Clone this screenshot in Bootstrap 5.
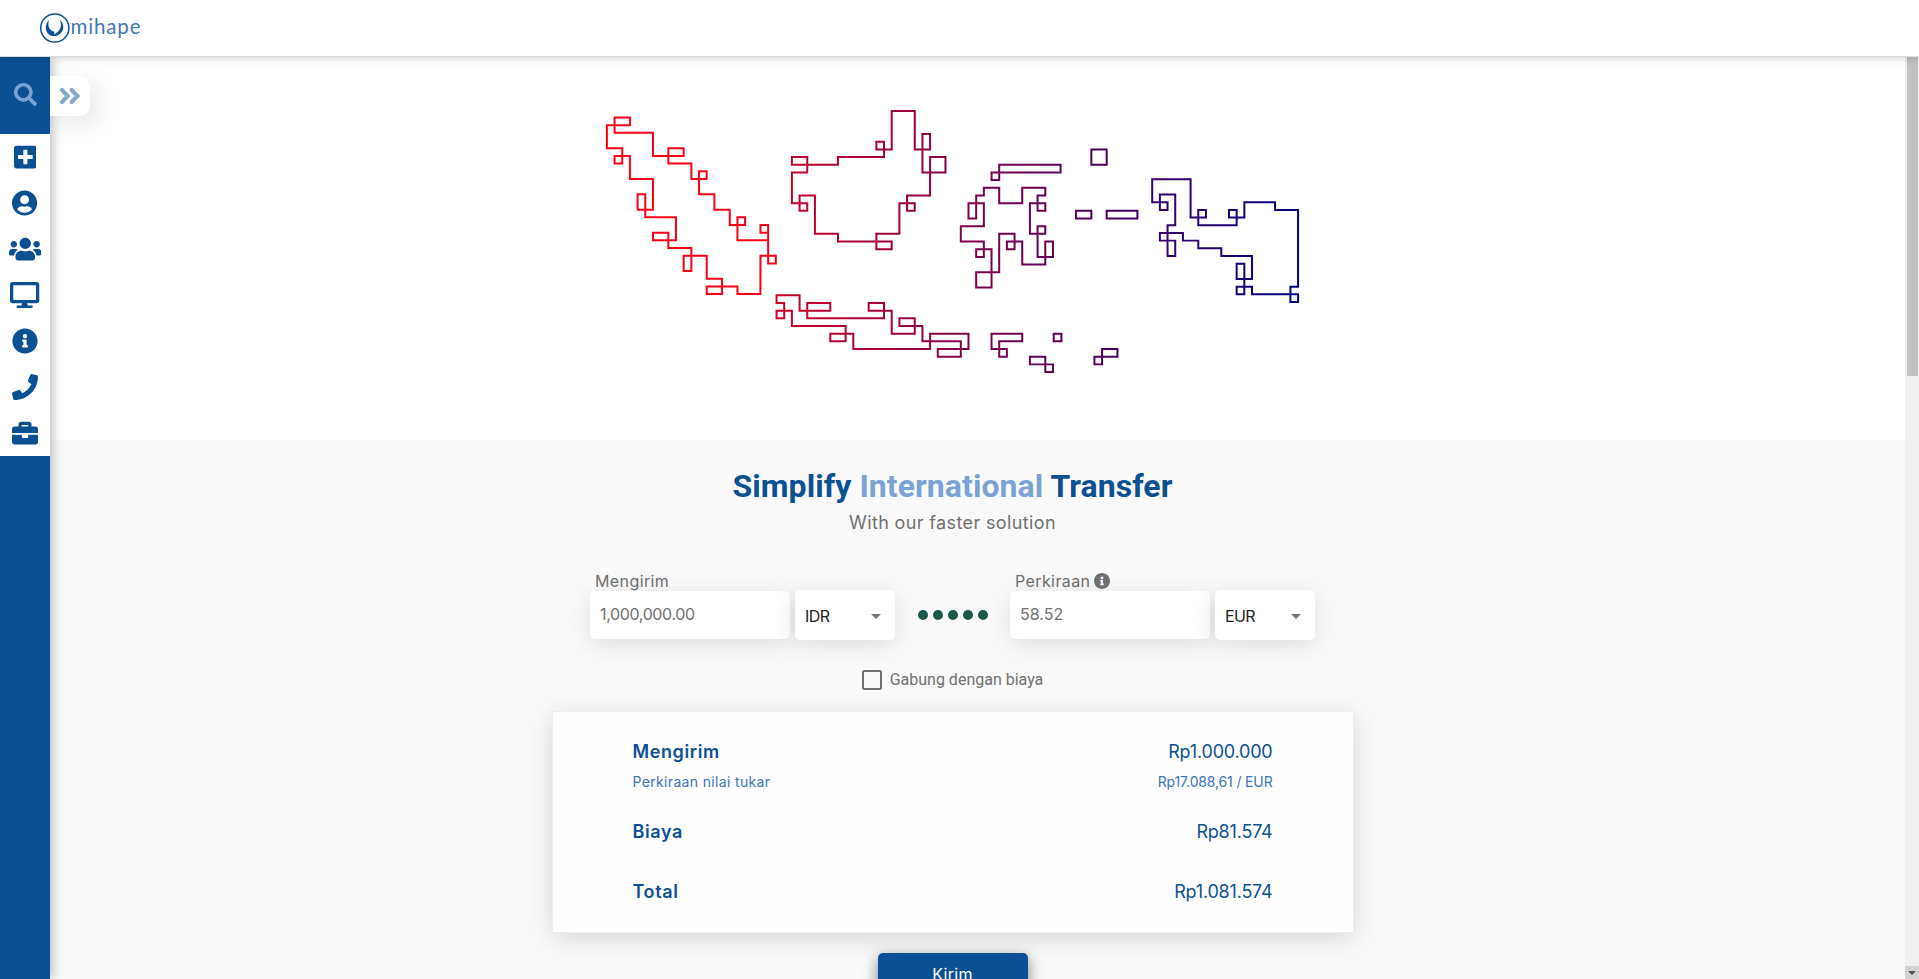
<!DOCTYPE html>
<html lang="id">
<head>
<meta charset="utf-8">
<title>Omihape</title>
<link href="https://cdn.jsdelivr.net/npm/bootstrap@5.3.0/dist/css/bootstrap.min.css" rel="stylesheet">
<style>
:root { --brand: #0b5093; --brand-soft: #7aa2d4; --ink: #707070; }
body { height: 979px; overflow: hidden; background: #fff; color: var(--ink); font-family: "Inter", "Open Sans", sans-serif; line-height: 1; }
.topbar { height: 57px; padding-left: 40px; border-bottom: 1px solid #dcdcdc; box-shadow: 0 0 10px rgba(0,0,0,.2); z-index: 5; background: #fff; position: relative; }
.shell { height: 922px; }
.side { width: 50px; background: var(--brand); box-shadow: 2px 0 12px rgba(0,0,0,.28); z-index: 3; position: relative; }
.side-search { height: 77px; padding-bottom: 2px; color: var(--brand-soft); }
.side-item { height: 46px; background: #fff; color: var(--brand); }
.side svg, .info-ico { fill: currentColor; display: block; }
.side-tab { position: absolute; left: 50px; top: 19px; width: 40px; height: 40px; background: #fff; border-radius: 0 10px 10px 0; box-shadow: 8px 8px 24px rgba(0,0,0,.1); }
.side .chevrons { fill: none; stroke: #85a7c9; stroke-width: 4; stroke-linecap: round; }
.hero { height: 383px; padding-right: 50px; }
.calc { height: 539px; background: #fafafa; padding-right: 50px; overflow: hidden; }
.headline { font: 700 32px/38px Roboto, sans-serif; letter-spacing: .06px; color: var(--brand); margin: 27px 0 0; white-space: nowrap; }
.headline span { color: var(--brand-soft); }
.tagline { font-size: 18px; line-height: 24px; margin-top: 6px; letter-spacing: .37px; height: 24px; }
.fields { margin-top: 33px; height: 72px; width: 725px; }
.cap { height: 23px; padding: 3px 0 0 5px; font-size: 16px; line-height: 20px; letter-spacing: .4px; }
.cap svg { position: relative; z-index: 1; }
.amount, .pick { background: #fff; border-radius: 5px; box-shadow: 0 5px 25px rgba(0,0,0,.12); }
.amount { width: 200px; height: 48px; padding: 0 0 2px 10px; font-size: 16px; }
.amount.long { letter-spacing: -.36px; }
.pick { width: 100px; height: 50px; margin: -1px 0 -1px 5px; padding: 2px 14px 0 10px; color: #222; font-size: 16px; letter-spacing: -.6px; position: relative; }
.arrow { border: 5px solid transparent; border-top-color: #757575; border-bottom: 0; }
.dots { padding-top: 42px; gap: 5px; }
.dots i { width: 10px; height: 10px; border-radius: 50%; background: #18594b; }
.combine { margin-top: 31px; height: 20px; gap: 8px; font: 400 16px/20px Roboto, sans-serif; }
.tick { width: 20px; height: 20px; border: 2px solid #707070; border-radius: 2px; }
.summary { width: 802px; height: 222px; margin-top: 21px; padding: 29px 80px 0 80px; background: #fefefe; border: 1px solid #ededed; box-shadow: 0 5px 25px rgba(0,0,0,.15); color: var(--brand); font-size: 18px; }
.line { height: 22px; line-height: 22px; letter-spacing: -.2px; }
.line b { font-weight: 600; letter-spacing: .62px; }
.fee { margin-top: 29px; }
.total { margin-top: 38px; }
.rate { font-size: 14px; line-height: 20px; color: #3c74b5; margin-top: 9px; height: 20px; letter-spacing: -.15px; }
.rate span:first-child { letter-spacing: .34px; }
.send { width: 150px; height: 50px; margin-top: 20px; border-radius: 5px; background: var(--brand); color: #fff; font-size: 16px; line-height: 20px; letter-spacing: .3px; padding-top: 11px; box-shadow: 0 5px 15px rgba(0,0,0,.5); text-align: center; position: relative; }
.rail { width: 14px; background: #f0f0f0; padding-left: 2px; }
.thumb { width: 11px; height: 319px; background: #c1c1c1; }
.down { width: 14px; height: 13px; margin-left: -2px; background: #d2d2d2; }
.down i { border: 4px solid transparent; border-top-color: #505050; border-bottom: 0; }
</style>
</head>
<body>
<header class="topbar d-flex align-items-center">
  <svg width="104" height="36" viewBox="40 10 104 36">
    <circle cx="54.8" cy="28" r="14.1" fill="none" stroke="#0b5093" stroke-width="1.5"/>
    <path fill="#0b5093" d="M49 20.3C44.800 24 44.700 31 49 34.500C51 36.200 54 36.500 56.500 35.700C60 34.800 63.300 31.500 63.300 27.300C63.300 24 62 21.500 59.800 20C61.800 24 61.300 29.500 57 32.500L54 34.500L54.500 31.800C50 31 47 26.500 49 20.300Z"/>
    <text x="70.500" y="33.500" font-family="Lato, sans-serif" font-size="20.500" fill="#3f78b0" textLength="70">mihape</text>
  </svg>
</header>
<div class="shell d-flex">
  <nav class="side flex-shrink-0">
    <div class="side-search d-flex align-items-center justify-content-center">
      <svg width="23" height="23" viewBox="0 0 512 512"><path d="M505 442.700L405.300 343c-4.500-4.500-10.600-7-17-7H372c27.600-35.300 44-79.700 44-128C416 93.100 322.900 0 208 0S0 93.100 0 208s93.100 208 208 208c48.300 0 92.700-16.400 128-44v16.300c0 6.400 2.500 12.500 7 17l99.700 99.700c9.400 9.400 24.600 9.400 33.900 0l28.300-28.300c9.400-9.400 9.400-24.600.1-34zM208 336c-70.700 0-128-57.200-128-128 0-70.700 57.200-128 128-128 70.700 0 128 57.200 128 128 0 70.700-57.200 128-128 128z"/></svg>
    </div>
    <div class="side-item d-flex align-items-center justify-content-center"><svg width="22.750" height="26" viewBox="0 0 448 512"><path d="M400 32H48C21.500 32 0 53.500 0 80v352c0 26.500 21.500 48 48 48h352c26.500 0 48-21.500 48-48V80c0-26.500-21.500-48-48-48zm-32 252c0 6.600-5.400 12-12 12h-92v92c0 6.600-5.400 12-12 12h-56c-6.600 0-12-5.400-12-12v-92H92c-6.600 0-12-5.400-12-12v-56c0-6.600 5.400-12 12-12h92v-92c0-6.600 5.400-12 12-12h56c6.600 0 12 5.400 12 12v92h92c6.600 0 12 5.400 12 12v56z"/></svg></div>
    <div class="side-item d-flex align-items-center justify-content-center"><svg width="25.200" height="26" viewBox="0 0 496 512"><path d="M248 8C111 8 0 119 0 256s111 248 248 248 248-111 248-248S385 8 248 8zm0 96c48.600 0 88 39.400 88 88s-39.400 88-88 88-88-39.400-88-88 39.400-88 88-88zm0 344c-58.700 0-111.300-26.600-146.500-68.200 18.800-35.400 55.600-59.800 98.500-59.800 2.400 0 4.800.4 7.100 1.100 13 4.200 26.600 6.900 40.900 6.900 14.300 0 28-2.700 40.900-6.900 2.300-.7 4.700-1.100 7.100-1.100 42.900 0 79.700 24.400 98.500 59.800C359.300 421.400 306.700 448 248 448z"/></svg></div>
    <div class="side-item d-flex align-items-center justify-content-center"><svg width="32.500" height="26" viewBox="0 0 640 512"><path d="M96 224c35.300 0 64-28.700 64-64s-28.700-64-64-64-64 28.700-64 64 28.700 64 64 64zm448 0c35.300 0 64-28.700 64-64s-28.700-64-64-64-64 28.700-64 64 28.700 64 64 64zm32 32h-64c-17.600 0-33.500 7.100-45.100 18.600 40.300 22.100 68.900 62 75.100 109.400h66c17.700 0 32-14.300 32-32v-32c0-35.300-28.700-64-64-64zm-256 0c61.900 0 112-50.100 112-112S381.900 32 320 32 208 82.100 208 144s50.100 112 112 112zm76.800 32h-8.300c-20.800 10-43.900 16-68.500 16s-47.600-6-68.500-16h-8.300C179.600 288 128 339.600 128 403.200V432c0 26.500 21.500 48 48 48h288c26.500 0 48-21.500 48-48v-28.800c0-63.600-51.600-115.200-115.200-115.200zm-223.700-13.400C161.500 263.100 145.600 256 128 256H64c-35.300 0-64 28.700-64 64v32c0 17.700 14.300 32 32 32h65.900c6.300-47.400 34.900-87.300 75.200-109.400z"/></svg></div>
    <div class="side-item d-flex align-items-center justify-content-center"><svg width="29.250" height="26" viewBox="0 0 576 512"><path d="M528 0H48C21.500 0 0 21.500 0 48v320c0 26.500 21.500 48 48 48h192l-16 48h-72c-13.300 0-24 10.700-24 24s10.700 24 24 24h272c13.300 0 24-10.700 24-24s-10.700-24-24-24h-72l-16-48h192c26.500 0 48-21.500 48-48V48c0-26.500-21.500-48-48-48zm-16 352H64V64h448v288z"/></svg></div>
    <div class="side-item d-flex align-items-center justify-content-center"><svg width="26" height="26" viewBox="0 0 512 512"><path d="M256 8C119.043 8 8 119.083 8 256c0 136.997 111.043 248 248 248s248-111.003 248-248C504 119.083 392.957 8 256 8zm0 110c23.196 0 42 18.804 42 42s-18.804 42-42 42-42-18.804-42-42 18.804-42 42-42zm56 254c0 6.627-5.373 12-12 12h-88c-6.627 0-12-5.373-12-12v-24c0-6.627 5.373-12 12-12h12v-64h-12c-6.627 0-12-5.373-12-12v-24c0-6.627 5.373-12 12-12h64c6.627 0 12 5.373 12 12v100h12c6.627 0 12 5.373 12 12v24z"/></svg></div>
    <div class="side-item d-flex align-items-center justify-content-center"><svg width="26" height="26" viewBox="0 0 512 512"><path d="M493.400 24.600l-104-24c-11.300-2.600-22.900 3.300-27.500 13.900l-48 112c-4.200 9.800-1.400 21.300 6.900 28l60.600 49.600c-36 76.700-98.900 140.500-177.200 177.200l-49.600-60.600c-6.800-8.300-18.200-11.100-28-6.900l-112 48C3.900 366.500-2 378.100.6 389.400l24 104C27.100 504.200 36.700 512 48 512c256.100 0 464-207.500 464-464 0-11.200-7.700-20.900-18.600-23.400z"/></svg></div>
    <div class="side-item d-flex align-items-center justify-content-center"><svg width="26" height="26" viewBox="0 0 512 512"><path d="M320 336c0 8.840-7.160 16-16 16h-96c-8.840 0-16-7.160-16-16v-48H0v144c0 25.600 22.400 48 48 48h416c25.600 0 48-22.400 48-48V288H320v48zm144-208h-80V80c0-25.600-22.400-48-48-48H176c-25.600 0-48 22.400-48 48v48H48c-25.600 0-48 22.400-48 48v80h512v-80c0-25.600-22.400-48-48-48zm-144 0H192V96h128v32z"/></svg></div>
    <div class="side-tab d-flex align-items-center justify-content-center">
      <svg class="chevrons" width="20" height="16" viewBox="0 0 20 16"><path d="M2 2L7.800 8L2 14M11.700 2L17.500 8L11.700 14"/></svg>
    </div>
  </nav>
  <main class="flex-grow-1">
    <section class="hero d-flex justify-content-center">
      <svg width="705" height="383" viewBox="600.300 57.200 705 383" fill="none">
        <defs>
          <linearGradient id="fadeWest" gradientUnits="userSpaceOnUse" x1="-2" y1="0" x2="66" y2="0"><stop stop-color="#cc0026"/><stop offset="1" stop-color="#000084"/></linearGradient>
          <linearGradient id="fadeEast" gradientUnits="userSpaceOnUse" x1="-49" y1="0" x2="19" y2="0"><stop stop-color="#cc0026"/><stop offset="1" stop-color="#000084"/></linearGradient>
        </defs>
        <!-- Sumatra -->
        <g transform="translate(607.200 117.700) scale(7.678)" stroke="#fb0014" stroke-width=".26">
          <path d="M0 1H3V0H1V2H6V5H10V4H8V6H11V8H13V7H12V10H14V12H16V14H18V13H17V16H21V14H20V15H21V19H22V18H20V23H17V22H13V23H15V21H13V18H10V20H11V17H8V15H6V16H9V13H5V10H4V12H6V8H3V5H1V6H2V4H0Z"/>
        </g>
        <!-- Kalimantan, Java, Sulawesi and the smaller islands -->
        <g transform="translate(792.200 111.200) scale(7.678)" stroke="url(#fadeWest)" stroke-width=".26">
          <path d="M0 7H6V6H12V4H11V5H13V0H16V5H18V3H17V8H20V6H18V11H15V13H16V12H14V16H11V18H13V17H6V16H3V11H1V13H2V12H0V8H2V6H0Z"/>
          <path d="M-2 24H1V26H5V25H2V27H12V25H10V26H13V29H16V27H14V28H17V30H22V32H19V31H23V29H18V31H8V29H5V30H7V28H0V26H-2V27H-1V25H-2Z"/>
          <path d="M27 7H35V8H26V9H27ZM39 5H41V7H39ZM37 13H39V14H37ZM41 13H45V14H41Z"/>
          <path d="M25 10H27V12H30V10H33V11H32V13H33V12H31V16H33V15H32V19H34V17H33V20H30V17H28V18H29V16H27V21H24V23H26V18H24V19H25V17H22V15H25V12H23V14H24V11H25Z"/>
          <path d="M26 29H30V30H27V32H28V31H26ZM34.100 29H35.100V30H34.100ZM31 32H33V34H34V33H31ZM40.400 31H42.400V32H39.400V33H40.400Z"/>
        </g>
        <!-- Papua -->
        <g transform="translate(1152.500 179.400) scale(7.678)" stroke="url(#fadeEast)" stroke-width=".26">
          <path d="M0 0H5V5H7V4H6V6H11V4H10V5H12V3H16V4H19V14H18V16H19V15H13V14H11V15H12V11H11V13H13V10H9V9H6V8H4V7H1V8H3V10H2V6H3V2H1V4H2V3H0Z"/>
        </g>
      </svg>
    </section>
    <section class="calc d-flex flex-column align-items-center">
      <h1 class="headline">Simplify <span>International</span> Transfer</h1>
      <div class="tagline">With our faster solution</div>
      <div class="fields d-flex justify-content-between">
        <div>
          <div class="cap">Mengirim</div>
          <div class="d-flex">
            <div class="amount long d-flex align-items-center">1,000,000.00</div>
            <div class="pick d-flex align-items-center justify-content-between">IDR<i class="arrow"></i></div>
          </div>
        </div>
        <div class="dots d-flex align-items-start"><i></i><i></i><i></i><i></i><i></i></div>
        <div>
          <div class="cap d-flex align-items-center">Perkiraan<svg class="info-ico ms-1" width="16" height="16" viewBox="8 8 496 496"><path d="M256 8C119.043 8 8 119.083 8 256c0 136.997 111.043 248 248 248s248-111.003 248-248C504 119.083 392.957 8 256 8zm0 110c23.196 0 42 18.804 42 42s-18.804 42-42 42-42-18.804-42-42 18.804-42 42-42zm56 254c0 6.627-5.373 12-12 12h-88c-6.627 0-12-5.373-12-12v-24c0-6.627 5.373-12 12-12h12v-64h-12c-6.627 0-12-5.373-12-12v-24c0-6.627 5.373-12 12-12h64c6.627 0 12 5.373 12 12v100h12c6.627 0 12 5.373 12 12v24z"/></svg></div>
          <div class="d-flex">
            <div class="amount d-flex align-items-center">58.52</div>
            <div class="pick d-flex align-items-center justify-content-between">EUR<i class="arrow"></i></div>
          </div>
        </div>
      </div>
      <div class="combine d-flex align-items-center"><span class="tick"></span><span>Gabung dengan biaya</span></div>
      <div class="summary flex-shrink-0">
        <div class="line d-flex justify-content-between"><b>Mengirim</b><span>Rp1.000.000</span></div>
        <div class="rate d-flex justify-content-between"><span>Perkiraan nilai tukar</span><span>Rp17.088,61 / EUR</span></div>
        <div class="line fee d-flex justify-content-between"><b>Biaya</b><span>Rp81.574</span></div>
        <div class="line total d-flex justify-content-between"><b>Total</b><span>Rp1.081.574</span></div>
      </div>
      <div class="send flex-shrink-0">Kirim</div>
    </section>
  </main>
  <div class="rail d-flex flex-column justify-content-between flex-shrink-0">
    <div class="thumb"></div>
    <div class="down d-flex align-items-center justify-content-center"><i></i></div>
  </div>
</div>
<script src="https://cdn.jsdelivr.net/npm/bootstrap@5.3.0/dist/js/bootstrap.bundle.min.js"></script>
</body>
</html>
